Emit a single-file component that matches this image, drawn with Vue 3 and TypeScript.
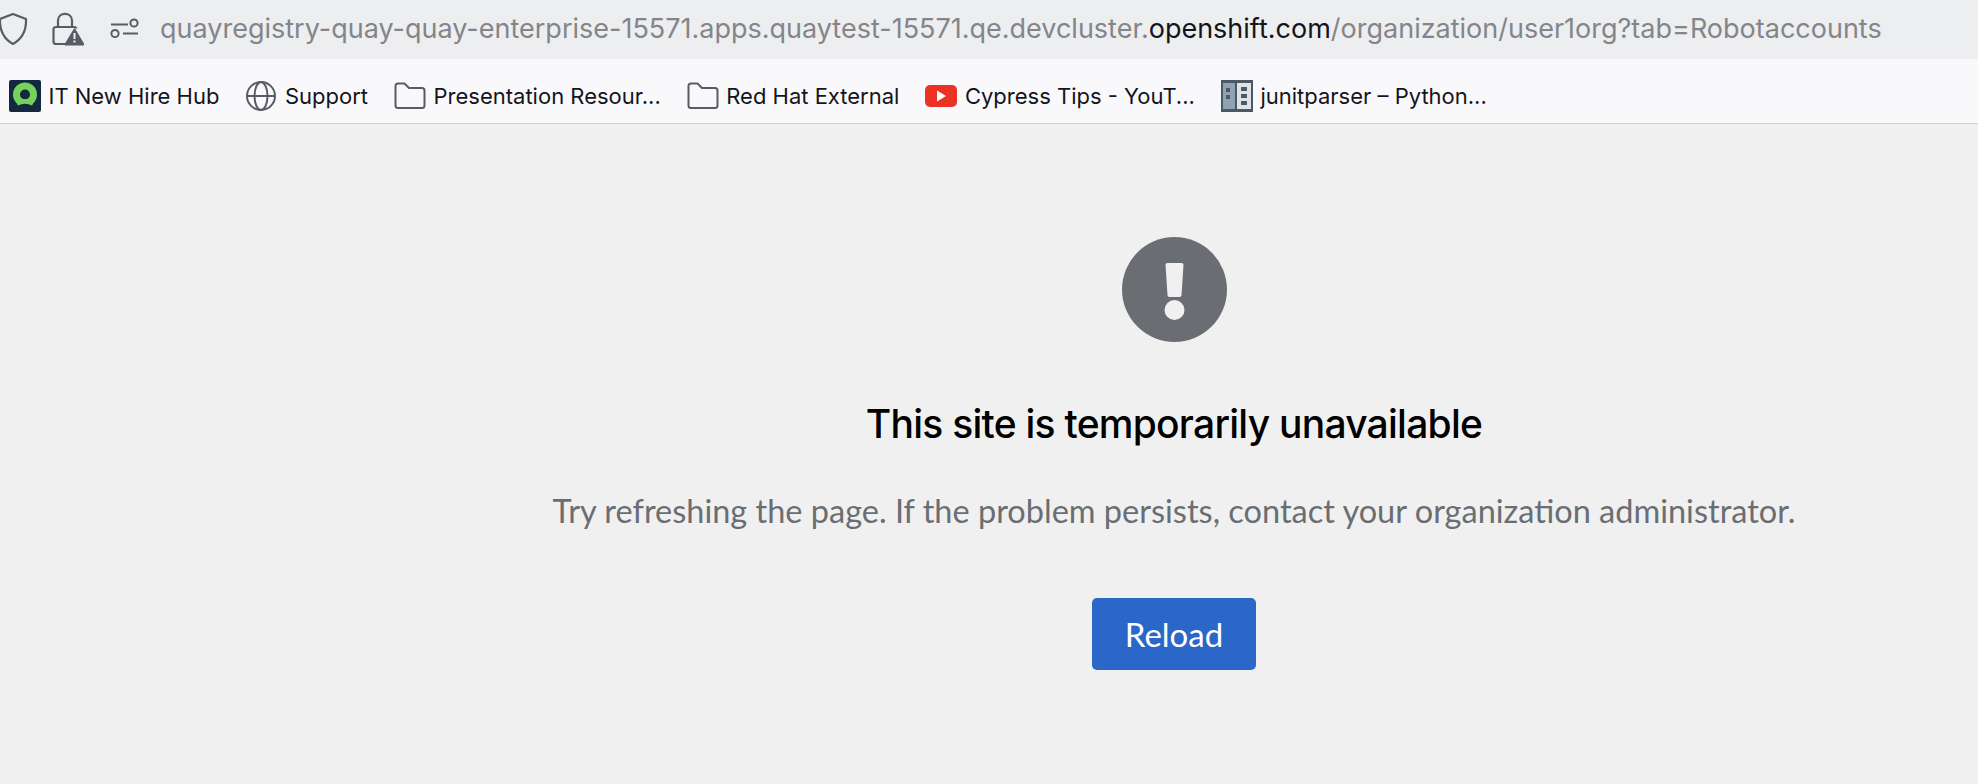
<script setup lang="ts">
type Bookmark = { label: string; icon: string }

const bookmarks: Bookmark[] = [
  { label: 'IT New Hire Hub', icon: 'hub' },
  { label: 'Support', icon: 'globe' },
  { label: 'Presentation Resour...', icon: 'folder' },
  { label: 'Red Hat External', icon: 'folder' },
  { label: 'Cypress Tips - YouT...', icon: 'youtube' },
  { label: 'junitparser – Python...', icon: 'book' }
]
</script>

<template>
  <div class="page">
    <div class="urlbar">
      <svg class="shield" width="30" height="34" viewBox="0 0 30 34" fill="none" stroke="#5b5b66" stroke-width="2.2">
        <path d="M14 2 L27 7 C27.5 18 23 27 14 32 C5 27 .5 18 1 7 Z" stroke-linejoin="round" />
      </svg>
      <svg class="lock" width="32" height="34" viewBox="0 0 32 34" fill="none">
        <path d="M19 32 H4 Q1.5 32 1.5 29.5 V17.5 Q1.5 15 4 15 H22 Q24 15 24.5 16.5" stroke="#5b5b66" stroke-width="2.2" />
        <path d="M6 15 V8.5 C6 -.3 20 -.3 20 8.5 V15" stroke="#5b5b66" stroke-width="2.2" />
        <path d="M22.5 17.5 L31.5 32.5 H13.5 Z" fill="#5b5b66" stroke="#5b5b66" stroke-width="2" stroke-linejoin="round" />
        <rect x="21.5" y="21" width="2" height="6" fill="#edeef0" />
        <rect x="21.5" y="28.5" width="2" height="2" fill="#edeef0" />
      </svg>
      <svg class="perm" width="30" height="22" viewBox="0 0 30 22" fill="none" stroke="#5b5b66" stroke-width="2">
        <path d="M1 6.5 H18 M13 15.5 H28" />
        <circle cx="24" cy="5" r="3.6" />
        <circle cx="5" cy="15.5" r="3.6" />
      </svg>
      <div class="address">quayregistry-quay-quay-enterprise-15571.apps.quaytest-15571.qe.devcluster.<span class="domain">openshift.com</span>/organization/user1org?tab=Robotaccounts</div>
    </div>

    <div class="bookmarks">
      <div v-for="b in bookmarks" :key="b.label" class="bookmark">
        <svg v-if="b.icon === 'hub'" width="32" height="32" viewBox="0 0 32 32">
          <rect width="32" height="32" rx="2" fill="#12293f" />
          <circle cx="16" cy="14.5" r="8.5" fill="none" stroke="#76d25c" stroke-width="7" />
          <path d="M5 24 Q16 19 27 24 L27 30 H5 Z" fill="#12293f" />
          <path d="M6.5 21 Q16 17.5 25.5 21 L23 25.5 Q16 22 9 25.5 Z" fill="#76d25c" />
        </svg>
        <svg v-else-if="b.icon === 'globe'" width="32" height="32" viewBox="0 0 32 32" fill="none" stroke="#5b5b66" stroke-width="2">
          <circle cx="16" cy="16" r="14" />
          <ellipse cx="16" cy="16" rx="6.5" ry="14" />
          <path d="M2 16 H30" />
        </svg>
        <svg v-else-if="b.icon === 'folder'" width="32" height="28" viewBox="0 0 32 28" fill="none" stroke="#5b5b66" stroke-width="2">
          <path d="M1.5 4 Q1.5 1.5 4 1.5 H10.5 L15 6 H28 Q30.5 6 30.5 8.5 V23.5 Q30.5 26 28 26 H4 Q1.5 26 1.5 23.5 Z" stroke-linejoin="round" />
        </svg>
        <svg v-else-if="b.icon === 'youtube'" width="32" height="24" viewBox="0 0 32 24">
          <rect width="32" height="22" y="1" rx="5" fill="#ea3323" />
          <path d="M12 6.5 L21 12 L12 17.5 Z" fill="#fff" />
        </svg>
        <svg v-else width="32" height="32" viewBox="0 0 32 32">
          <rect width="32" height="32" fill="#4a5963" />
          <rect x="2" y="3" width="12" height="26" fill="#8fa3b2" />
          <rect x="16" y="3" width="14" height="26" fill="#dfe3e6" />
          <rect x="5" y="8" width="4" height="4" fill="#4a5963" />
          <rect x="5" y="15" width="4" height="4" fill="#4a5963" />
          <rect x="20" y="7" width="6" height="4" fill="#4a5963" />
          <rect x="20" y="14" width="6" height="4" fill="#4a5963" />
          <rect x="20" y="21" width="6" height="4" fill="#4a5963" />
        </svg>
        <span>{{ b.label }}</span>
      </div>
    </div>

    <main class="content">
      <svg class="alert" width="105" height="105" viewBox="0 0 105 105">
        <circle cx="52.5" cy="52.5" r="52.5" fill="#6a6e73" />
        <path d="M43.5 28 Q43.5 26 45.5 26 H59.5 Q61.5 26 61.5 28 L59.5 58 Q59.5 60 57.5 60 H47.5 Q45.5 60 45.5 58 Z" fill="#f0f0f0" />
        <circle cx="52.5" cy="73" r="10" fill="#f0f0f0" />
      </svg>
      <h1>This site is temporarily unavailable</h1>
      <p>Try refreshing the page. If the problem persists, contact your organization administrator.</p>
      <button type="button">Reload</button>
    </main>
  </div>
</template>

<style scoped>
.page {
  width: 1978px;
  height: 784px;
  overflow: hidden;
  background: #f0f0f0;
  font-family: "Liberation Sans", Arial, sans-serif;
  display: flex;
  flex-direction: column;
}
.urlbar {
  height: 59px;
  flex: none;
  background: #edeef0;
  display: flex;
  align-items: center;
  padding-bottom: 2px;
  box-sizing: border-box;
}
.shield { margin-left: -1px; margin-right: 23px; }
.lock { margin-right: 26px; }
.perm { margin-right: 20px; }
.address {
  font-family: Inter, "Liberation Sans", sans-serif;
  font-size: 27px;
  color: #84858a;
  white-space: nowrap;
}
.domain { color: #15141a; }
.bookmarks {
  flex: none;
  background: #f9f9fb;
  border-bottom: 1px solid #cfcfd8;
  display: flex;
  align-items: center;
  padding: 9px 0 0 9px;
  height: 55px;
  gap: 26px;
}
.bookmark {
  display: flex;
  align-items: center;
  gap: 7.5px;
  font-family: Inter, "Liberation Sans", sans-serif;
  font-size: 22px;
  color: #15141a;
  white-space: nowrap;
}
.content {
  flex: 1;
  display: flex;
  flex-direction: column;
  align-items: center;
  padding-left: 370px;
  padding-top: 113px;
}
.alert { flex: none; }
h1 {
  margin: 58px 0 0;
  font-family: Inter, "Liberation Sans", sans-serif;
  font-size: 39px;
  font-weight: 500;
  letter-spacing: -0.75px;
  line-height: 48px;
  color: #000;
}
p {
  margin: 42px 0 0;
  font-family: Lato, "Liberation Sans", sans-serif;
  font-size: 32.5px;
  line-height: 42px;
  color: #6a6e73;
}
button {
  margin-top: 66px;
  width: 164px;
  height: 72px;
  border: none;
  border-radius: 5px;
  background: #2b66c9;
  color: #fff;
  font-family: Lato, "Liberation Sans", sans-serif;
  font-size: 33px;
}
</style>

<style>
html, body { margin: 0; }
</style>
